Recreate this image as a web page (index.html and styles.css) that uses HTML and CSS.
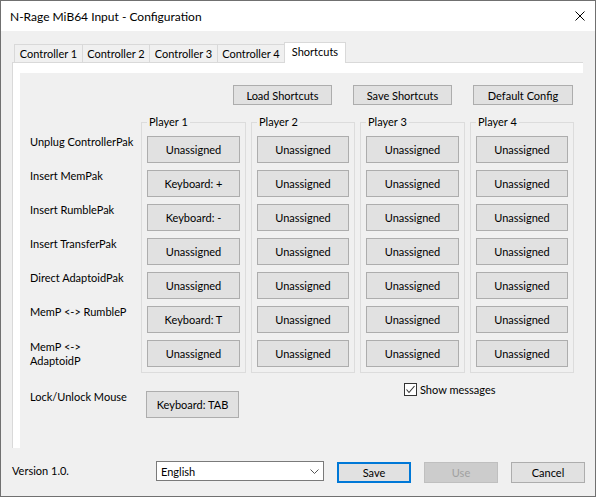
FILE: index.html
```html
<!DOCTYPE html>
<html lang="en">
<head>
    <meta charset="UTF-8">
    <title>N-Rage MiB64 Input - Configuration</title>
    <link rel="stylesheet" href="styles.css">
</head>
<body>
    <div class="window">
        <div class="titlebar">
            <span class="title">N-Rage MiB64 Input - Configuration</span>
            <svg class="close" width="10" height="10" viewBox="0 0 10 10">
                <path d="M0.5 0.5L9.5 9.5M9.5 0.5L0.5 9.5" stroke="#000" stroke-width="1" fill="none"/>
            </svg>
        </div>

        <div class="client">
            <div class="tabs">
                <div class="tab">Controller 1</div>
                <div class="tab">Controller 2</div>
                <div class="tab">Controller 3</div>
                <div class="tab">Controller 4</div>
                <div class="tab active">Shortcuts</div>
            </div>

            <div class="panel">
                <div class="page">
                    <div class="top-buttons">
                        <button class="btn">Load Shortcuts</button>
                        <button class="btn">Save Shortcuts</button>
                        <button class="btn">Default Config</button>
                    </div>

                    <div class="grid">
                        <div class="labels">
                            <div class="label">Unplug ControllerPak</div>
                            <div class="label">Insert MemPak</div>
                            <div class="label">Insert RumblePak</div>
                            <div class="label">Insert TransferPak</div>
                            <div class="label">Direct AdaptoidPak</div>
                            <div class="label">MemP &lt;-&gt; RumbleP</div>
                            <div class="label two-line">MemP &lt;-&gt;<br>AdaptoidP</div>
                        </div>

                        <fieldset class="player">
                            <legend>Player 1</legend>
                            <button class="btn">Unassigned</button>
                            <button class="btn">Keyboard: +</button>
                            <button class="btn">Keyboard: -</button>
                            <button class="btn">Unassigned</button>
                            <button class="btn">Unassigned</button>
                            <button class="btn">Keyboard: T</button>
                            <button class="btn">Unassigned</button>
                        </fieldset>

                        <fieldset class="player">
                            <legend>Player 2</legend>
                            <button class="btn">Unassigned</button>
                            <button class="btn">Unassigned</button>
                            <button class="btn">Unassigned</button>
                            <button class="btn">Unassigned</button>
                            <button class="btn">Unassigned</button>
                            <button class="btn">Unassigned</button>
                            <button class="btn">Unassigned</button>
                        </fieldset>

                        <fieldset class="player">
                            <legend>Player 3</legend>
                            <button class="btn">Unassigned</button>
                            <button class="btn">Unassigned</button>
                            <button class="btn">Unassigned</button>
                            <button class="btn">Unassigned</button>
                            <button class="btn">Unassigned</button>
                            <button class="btn">Unassigned</button>
                            <button class="btn">Unassigned</button>
                        </fieldset>

                        <fieldset class="player">
                            <legend>Player 4</legend>
                            <button class="btn">Unassigned</button>
                            <button class="btn">Unassigned</button>
                            <button class="btn">Unassigned</button>
                            <button class="btn">Unassigned</button>
                            <button class="btn">Unassigned</button>
                            <button class="btn">Unassigned</button>
                            <button class="btn">Unassigned</button>
                        </fieldset>
                    </div>

                    <div class="lock-row">
                        <div class="lock-label">Lock/Unlock Mouse</div>
                        <button class="btn key">Keyboard: TAB</button>
                        <label class="check">
                            <span class="box">
                                <svg width="11" height="11" viewBox="0 0 11 11">
                                    <path d="M1.5 5.5L4 8.5L9.5 2" stroke="#333" stroke-width="1.1" fill="none"/>
                                </svg>
                            </span>
                            Show messages
                        </label>
                    </div>
                </div>
            </div>
        </div>

        <div class="footer">
            <span class="version">Version 1.0.</span>
            <div class="select">
                <span>English</span>
                <svg width="9" height="5" viewBox="0 0 9 5">
                    <path d="M0.5 0.5L4.5 4.5L8.5 0.5" stroke="#555" stroke-width="1" fill="none"/>
                </svg>
            </div>
            <button class="btn foot default">Save</button>
            <button class="btn foot" disabled>Use</button>
            <button class="btn foot">Cancel</button>
        </div>
    </div>
</body>
</html>
```

FILE: styles.css
```css
* {
    box-sizing: border-box;
}

body {
    margin: 0;
    background: #f0f0f0;
    font-family: Lato, "Liberation Sans", sans-serif;
    font-size: 11px;
    color: #000;
}

.window {
    width: 596px;
    height: 497px;
    border: 1px solid #707070;
    background: #f0f0f0;
    display: flex;
    flex-direction: column;
}

.titlebar {
    height: 30px;
    background: #fff;
    display: flex;
    align-items: center;
    justify-content: space-between;
    padding: 0 10px 0 9px;
    font-size: 12px;
}

.client {
    padding: 11px 11px 0 11px;
}

/* tab strip */
.tabs {
    display: flex;
    align-items: flex-end;
    height: 21px;
    margin: 0 0 -1px 2px;
    position: relative;
    z-index: 1;
}

.tab {
    width: 68px;
    height: 18px;
    margin-bottom: 1px;
    border: 1px solid #d9d9d9;
    border-bottom: none;
    border-right: none;
    background: #f0f0f0;
    text-align: center;
    line-height: 18px;
    white-space: nowrap;
}

.tab:nth-child(2),
.tab:nth-child(4) {
    width: 67px;
}

.tab.active {
    width: 62px;
    height: 21px;
    margin-bottom: 0;
    border-right: 1px solid #d9d9d9;
    background: #fff;
    line-height: 17px;
}

.panel {
    width: 571px;
    height: 386px;
    background: #fff;
    border-top: 1px solid #d9d9d9;
    border-left: 1px solid #d9d9d9;
    padding: 10px 0 0 7px;
    display: flex;
}

.page {
    flex: 1;
    background: #f0f0f0;
}

.btn {
    height: 20px;
    padding: 0;
    border: 1px solid #adadad;
    background: #e1e1e1;
    color: #000;
    font: inherit;
    white-space: nowrap;
}

.top-buttons {
    display: flex;
    justify-content: flex-end;
    gap: 21px;
    padding: 12px 10px 0 0;
}

.top-buttons .btn {
    width: 99px;
}

.top-buttons .btn:last-child {
    width: 100px;
}

/* shortcut table */
.grid {
    display: flex;
    margin-top: 10px;
}

.labels {
    width: 121px;
    padding: 20px 0 0 10px;
    white-space: nowrap;
}

.label {
    height: 34px;
    line-height: 14px;
}

.label.two-line {
    line-height: 14px;
    padding-top: 1px;
}

.player {
    width: 105px;
    min-width: 0;
    margin: 0 5px 0 0;
    padding: 7px 5px 5px;
    border: 1px solid #dcdcdc;
    display: flex;
    flex-direction: column;
    gap: 7px;
}

.player:nth-child(3) {
    width: 104px;
}

.player:last-child {
    width: 104px;
    margin-right: 0;
}

.player legend {
    padding: 0 2px;
    line-height: 14px;
}

.player .btn {
    width: 100%;
    height: 27px;
}

.lock-row {
    display: flex;
    align-items: flex-start;
    margin-top: 10px;
}

.lock-label {
    width: 121px;
    padding: 7px 0 0 10px;
    line-height: 14px;
    white-space: nowrap;
}

.btn.key {
    width: 93px;
    height: 27px;
    margin: 8px 0 0 5px;
}

.check {
    display: flex;
    align-items: center;
    gap: 3px;
    height: 13px;
    margin-left: 165px;
}

.box {
    width: 13px;
    height: 13px;
    border: 1px solid #333;
    background: #fff;
    display: flex;
}

/* bottom bar */
.footer {
    display: flex;
    align-items: flex-start;
    padding: 13px 0 0 11px;
}

.version {
    width: 144px;
    line-height: 20px;
}

.select {
    width: 168px;
    height: 20px;
    border: 1px solid #7a7a7a;
    background: #fff;
    display: flex;
    align-items: center;
    justify-content: space-between;
    padding: 0 4px 0 4px;
}

.btn.foot {
    width: 74px;
    height: 21px;
    margin: 1px 0 0 13px;
}

.btn.default {
    border: 2px solid #0078d7;
}

.btn:disabled {
    background: #cccccc;
    border-color: #bfbfbf;
    color: #a0a0a0;
}
```
